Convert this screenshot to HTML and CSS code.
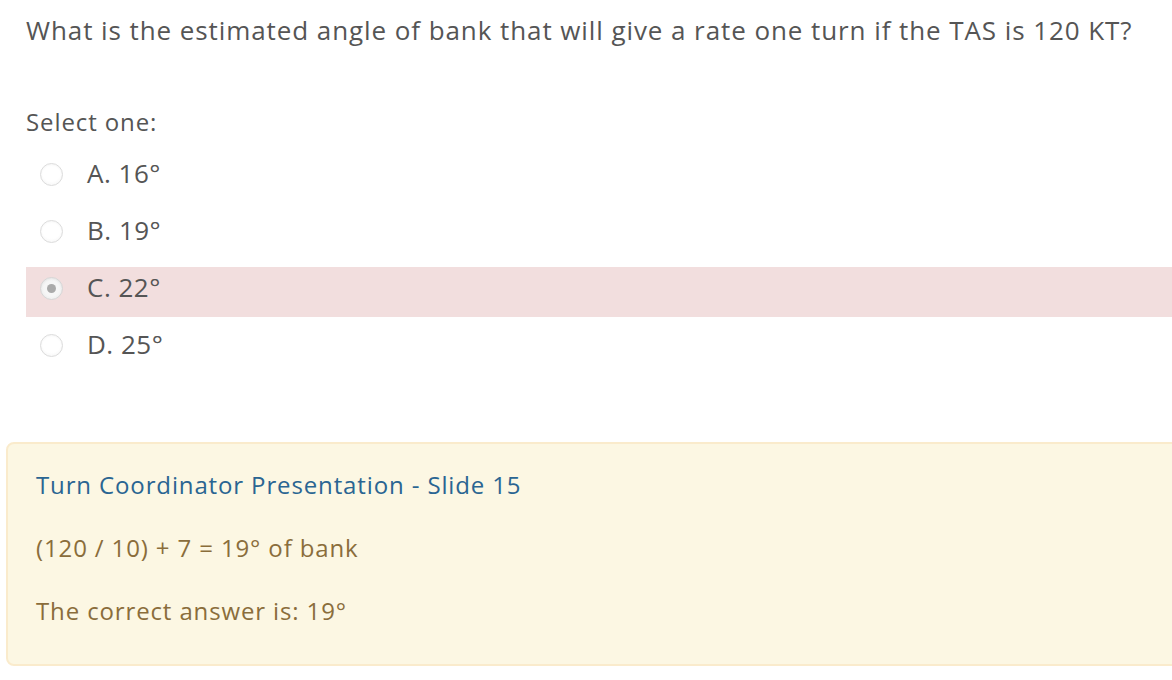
FILE: index.html
```html
<!DOCTYPE html>
<html lang="en">
<head>
<meta charset="utf-8">
<title>Question</title>
<link rel="stylesheet" href="styles.css">
</head>
<body>
<div class="que">
  <div class="formulation">
    <div class="qtext">What is the estimated angle of bank that will give a rate one turn if the TAS is 120 KT?</div>
    <div class="ablock">
      <div class="prompt">Select one:</div>
      <div class="answer">
        <div class="opt"><span class="radio"></span><span class="label">A. 16°</span></div>
        <div class="opt"><span class="radio"></span><span class="label">B. 19°</span></div>
        <div class="opt incorrect"><span class="radio checked"></span><span class="label">C. 22°</span></div>
        <div class="opt"><span class="radio"></span><span class="label">D. 25°</span></div>
      </div>
    </div>
  </div>
  <div class="outcome">
    <p class="link">Turn Coordinator Presentation - Slide 15</p>
    <p>(120 / 10) + 7 = 19° of bank</p>
    <p>The correct answer is: 19°</p>
  </div>
</div>
</body>
</html>
```
FILE: styles.css
```css
html, body {
  margin: 0;
  padding: 0;
  background: #ffffff;
  overflow: hidden;
}
body {
  font-family: "Open Sans", "DejaVu Sans", sans-serif;
  color: #555555;
}
.que {
  width: 1400px;
}
.formulation {
  padding: 12px 0 0 26px;
}
.qtext {
  font-size: 26px;
  line-height: 36px;
  letter-spacing: 0.92px;
}
.prompt {
  margin-top: 57px;
  font-size: 24px;
  line-height: 34px;
  letter-spacing: 0.9px;
}
.answer {
  margin-top: 14px;
  display: flex;
  flex-direction: column;
  gap: 7px;
}
.opt {
  height: 50px;
  display: flex;
  align-items: flex-start;
  font-size: 26px;
  line-height: 40px;
  letter-spacing: 0.5px;
}
.opt.incorrect {
  background: #f2dede;
}
.radio {
  box-sizing: border-box;
  width: 23px;
  height: 23px;
  margin: 10px 24px 0 14px;
  border-radius: 50%;
  border: 1px solid #dcdcdc;
  background: radial-gradient(circle at 50% 40%, #ffffff 55%, #f1f1f1 100%);
  box-shadow: inset 0 1px 2px rgba(0,0,0,0.04);
  display: flex;
  align-items: center;
  justify-content: center;
}
.radio.checked {
  border-color: #d6d6d6;
  background: radial-gradient(circle at 50% 50%, #f6f6f6 50%, #e6e6e6 100%);
}
.radio.checked::after {
  content: "";
  width: 9px;
  height: 9px;
  border-radius: 50%;
  background: #aaaaaa;
}
.outcome {
  margin: 68px 0 0 6px;
  border: 2px solid #faebcc;
  border-radius: 8px;
  background: #fcf7e3;
  padding: 24px 28px 36px;
  color: #8a6d3b;
  font-size: 24px;
  line-height: 34px;
  letter-spacing: 0.87px;
}
.outcome p {
  margin: 0 0 29px;
}
.outcome p:last-child {
  margin-bottom: 0;
}
.outcome .link {
  color: #2a6592;
}
```
